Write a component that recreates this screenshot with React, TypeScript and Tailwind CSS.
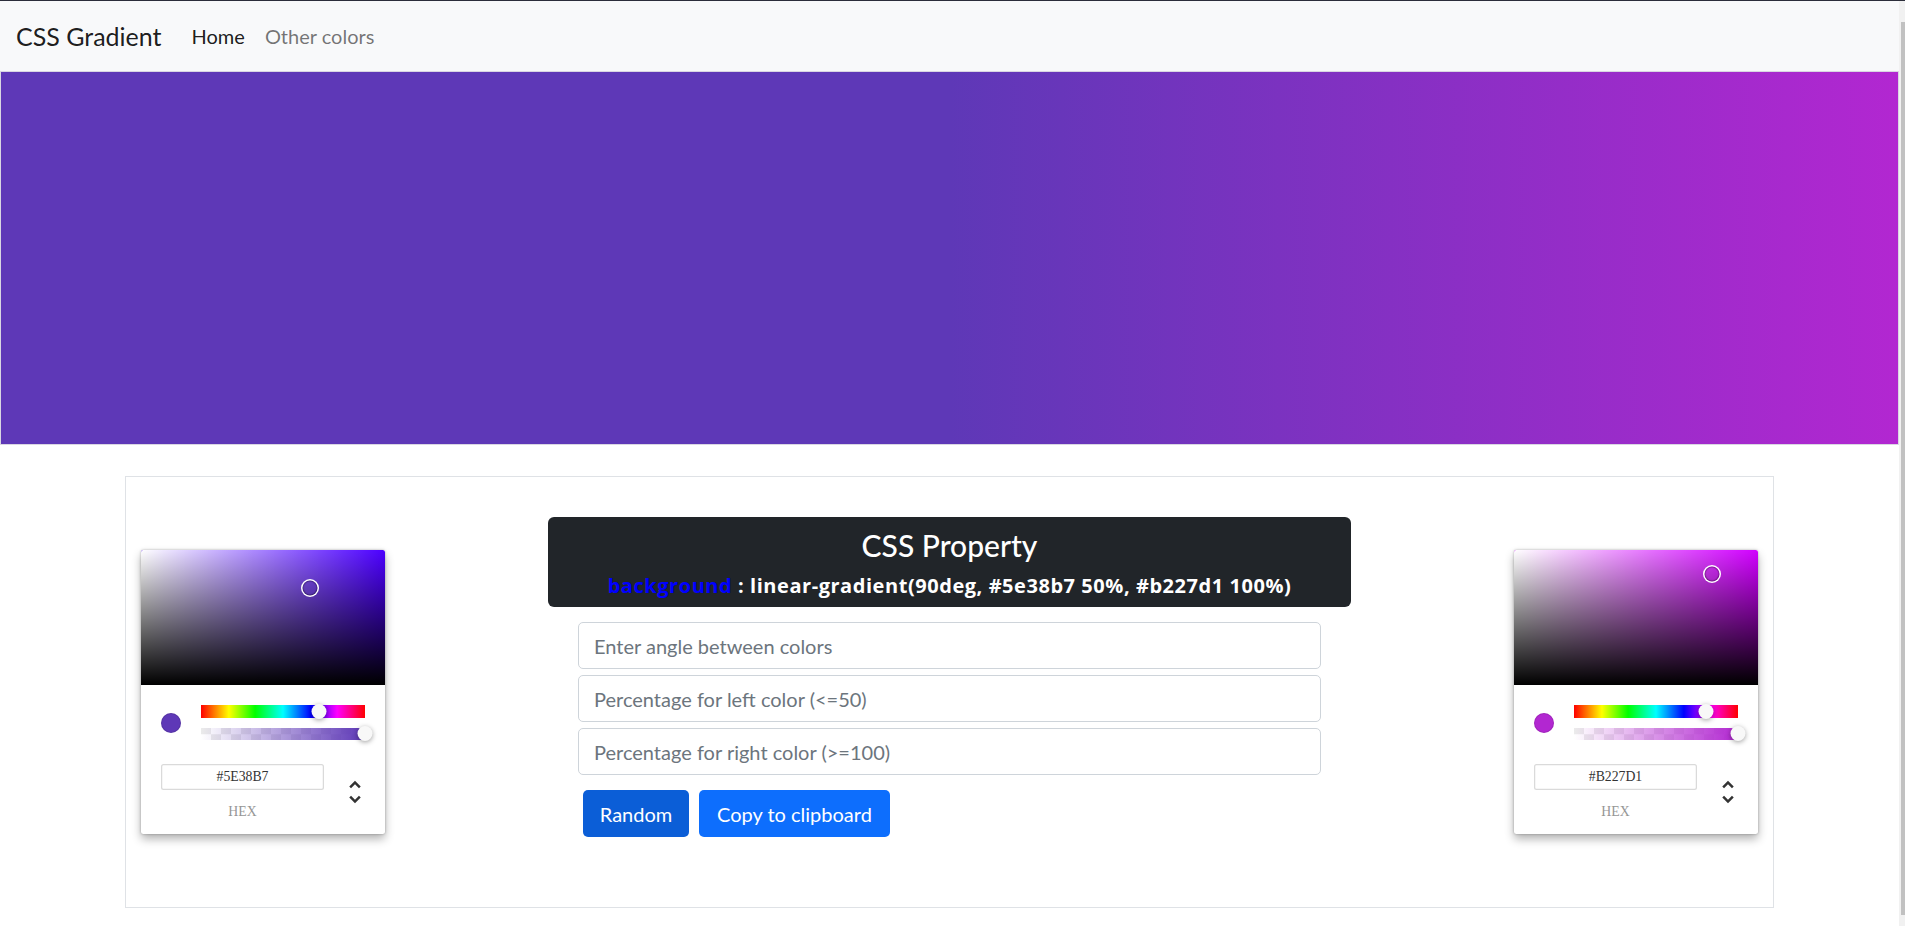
import React from "react";

type Hsv = { h: number; s: number; v: number; r: number; g: number; b: number };

function hexToHsv(hex: string): Hsv {
  const n = parseInt(hex.slice(1), 16);
  const r = (n >> 16) & 255;
  const g = (n >> 8) & 255;
  const b = n & 255;
  const max = Math.max(r, g, b);
  const min = Math.min(r, g, b);
  const d = max - min;
  let h = 0;
  if (d) {
    if (max === r) h = 60 * (((g - b) / d) % 6);
    else if (max === g) h = 60 * ((b - r) / d + 2);
    else h = 60 * ((r - g) / d + 4);
  }
  if (h < 0) h += 360;
  return { h, s: max ? d / max : 0, v: max / 255, r, g, b };
}

function UnfoldIcon() {
  return (
    <svg viewBox="0 0 24 24" className="h-[30px] w-[30px]">
      <path
        fill="#333"
        d="M12,18.17L8.83,15L7.42,16.41L12,21L16.59,16.41L15.17,15M12,5.83L15.17,9L16.58,7.59L12,3L7.41,7.59L8.83,9L12,5.83Z"
      />
    </svg>
  );
}

function ColorPicker({ hex }: { hex: string }) {
  const { h, s, v, r, g, b } = hexToHsv(hex);

  return (
    <div className="w-[244px] rounded-[2.5px] bg-white font-['Liberation_Serif',serif] shadow-[0_0_2.5px_rgba(0,0,0,0.3),0_5px_10px_rgba(0,0,0,0.3)]">
      {/* saturation */}
      <div
        className="relative h-[135px] overflow-hidden rounded-t-[2.5px]"
        style={{ backgroundColor: `hsl(${h}, 100%, 50%)` }}
      >
        <div className="absolute inset-0 bg-[linear-gradient(to_right,#fff,rgba(255,255,255,0))]" />
        <div className="absolute inset-0 bg-[linear-gradient(to_top,#000,rgba(0,0,0,0))]" />
        <div
          className="absolute h-[15px] w-[15px] -translate-x-1/2 -translate-y-1/2 rounded-full shadow-[0_0_0_1.5px_#fff,inset_0_0_1px_1px_rgba(0,0,0,0.3)]"
          style={{ left: `${s * 100}%`, top: `${(1 - v) * 100}%` }}
        />
      </div>

      <div className="px-[20px] pt-[20px] pb-[15px]">
        <div className="flex">
          <div className="w-[40px]">
            <div
              className="mt-[7.5px] h-[20px] w-[20px] rounded-full shadow-[inset_0_0_0_1px_rgba(0,0,0,0.1)]"
              style={{ backgroundColor: hex }}
            />
          </div>
          <div className="flex-1">
            <div className="relative mb-[10px] h-[12.5px] bg-[linear-gradient(to_right,#f00_0%,#ff0_17%,#0f0_33%,#0ff_50%,#00f_67%,#f0f_83%,#f00_100%)]">
              <div
                className="absolute top-[-1.25px] h-[15px] w-[15px] -translate-x-1/2 rounded-full bg-[#f8f8f8] shadow-[0_1.25px_5px_rgba(0,0,0,0.37)]"
                style={{ left: `${(h / 360) * 100}%` }}
              />
            </div>
            <div className="relative h-[12.5px] bg-[conic-gradient(transparent_0_25%,rgba(0,0,0,0.08)_0_50%,transparent_0_75%,rgba(0,0,0,0.08)_0)] bg-[length:20px_20px] bg-left">
              <div
                className="absolute inset-0"
                style={{
                  background: `linear-gradient(to right, rgba(${r},${g},${b},0), rgb(${r},${g},${b}))`,
                }}
              />
              <div className="absolute left-full top-[-1.25px] h-[15px] w-[15px] -translate-x-1/2 rounded-full bg-[#f8f8f8] shadow-[0_1.25px_5px_rgba(0,0,0,0.37)]" />
            </div>
          </div>
        </div>

        <div className="flex pt-[24px]">
          <div className="flex-1">
            <div className="h-[26px] w-[163px] rounded-[2.5px] text-center text-[13.75px] leading-[26px] text-[#333] shadow-[inset_0_0_0_1.25px_#dadada]">
              {hex.toUpperCase()}
            </div>
            <div className="mt-[15px] w-[163px] text-center text-[13.75px] leading-[14px] text-[#969696] uppercase">
              hex
            </div>
          </div>
          <div className="relative w-[40px]">
            <div className="absolute right-[-5px] top-[13px]">
              <UnfoldIcon />
            </div>
          </div>
        </div>
      </div>
    </div>
  );
}

export default function App() {
  const left = "#5e38b7";
  const right = "#b227d1";

  return (
    <div className="flex h-[926px] flex-col overflow-hidden bg-white font-['Lato','Noto_Sans',sans-serif]">
      <div className="h-px w-full bg-[#2b2d3a]" />
      <div className="flex flex-1">
        <main className="w-[1899px]">
          <nav className="flex h-[70px] items-center bg-[#f8f9fa] px-[16px]">
            <a className="mr-[20px] text-[25px] leading-[37px] text-[rgba(0,0,0,0.9)]">
              CSS Gradient
            </a>
            <ul className="flex text-[20px] leading-[30px]">
              <li className="px-[10px] text-[rgba(0,0,0,0.9)]">Home</li>
              <li className="px-[10px] text-[rgba(0,0,0,0.55)]">Other colors</li>
            </ul>
          </nav>

          <section className="h-[374px] border border-[#d9d6e2] bg-[linear-gradient(90deg,#5e38b7_50%,#b227d1_100%)]" />

          <div className="mx-auto mt-[31px] w-[1649px] border border-[#dfe2e6]">
            <div className="flex items-center justify-between px-[15px] pt-[40px] pb-[40px]">
              <ColorPicker hex={left} />

              <div className="w-[803px] pb-[30px]">
                <div className="rounded-[6px] bg-[#212529] px-4 pt-[10px] pb-[6px] text-center text-white">
                  <h4 className="mb-[8px] text-[30px] font-medium leading-[36px]">CSS Property</h4>
                  <p className="font-['Open_Sans','Noto_Sans',sans-serif] text-[20px] font-bold leading-[30px] tracking-[0.55px]">
                    <span className="text-[#0000ff]">background</span> : linear-gradient(90deg, {left} 50%, {right} 100%)
                  </p>
                </div>

                <div className="mt-[15px] flex flex-col gap-[6px] px-[30px]">
                  <input
                    className="h-[47px] rounded-[5px] border border-[#ced4da] bg-white px-[15px] text-[20px] outline-none placeholder:text-[#6c757d]"
                    placeholder="Enter angle between colors"
                  />
                  <input
                    className="h-[47px] rounded-[5px] border border-[#ced4da] bg-white px-[15px] text-[20px] outline-none placeholder:text-[#6c757d]"
                    placeholder="Percentage for left color (<=50)"
                  />
                  <input
                    className="h-[47px] rounded-[5px] border border-[#ced4da] bg-white px-[15px] text-[20px] outline-none placeholder:text-[#6c757d]"
                    placeholder="Percentage for right color (>=100)"
                  />
                </div>

                <div className="mt-[15px] flex gap-[10px] pl-[35px]">
                  <button className="h-[47px] w-[106px] rounded-[5px] bg-[#0b5ed7] text-[20px] text-white">
                    Random
                  </button>
                  <button className="h-[47px] w-[191px] rounded-[5px] bg-[#0d6efd] text-[20px] text-white">
                    Copy to clipboard
                  </button>
                </div>
              </div>

              <ColorPicker hex={right} />
            </div>
          </div>
        </main>

        {/* window scrollbar */}
        <div className="flex w-[6px] bg-[#f1f1f1] pt-[21px] pb-[11px] pl-[2px]">
          <div className="flex-1 bg-[#c1c1c1]" />
        </div>
      </div>
    </div>
  );
}
